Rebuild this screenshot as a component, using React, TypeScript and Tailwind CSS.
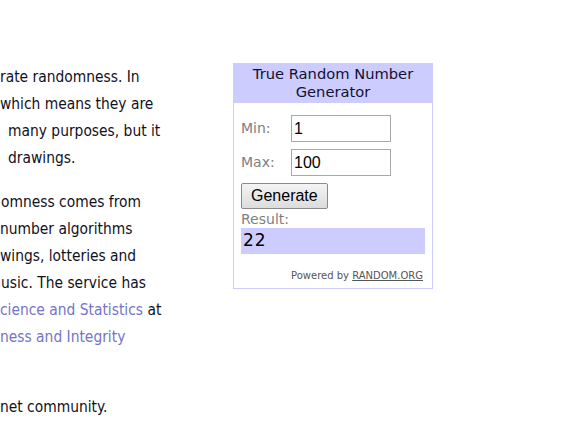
// Random number widget beside a clipped article column
import React from "react";

const textFont = { fontFamily: '"DejaVu Sans Condensed", "DejaVu Sans", sans-serif' };
const widgetFont = { fontFamily: '"DejaVu Sans", Verdana, sans-serif' };
const inputFont = { fontFamily: '"Liberation Sans", Arial, sans-serif' };

// Visible fragments of the article text (the left part is scrolled out of view)
const firstPara = [
  { text: "rate randomness. In", pad: "pl-0" },
  { text: "which means they are", pad: "pl-0" },
  { text: "many purposes, but it", pad: "pl-[8px]" },
  { text: "drawings.", pad: "pl-[8px]" },
];

export default function App() {
  return (
    <div className="min-h-screen bg-white flex items-start">
      {/* Article column, cut off at the left edge */}
      <div className="w-[175px] overflow-hidden mt-[64px] text-[15.4px] leading-[27px] text-[#111122]" style={textFont}>
        <div>
          {firstPara.map((line, i) => (
            <div key={i} className={"whitespace-nowrap " + line.pad}>{line.text}</div>
          ))}
        </div>
        <div className="mt-[17px]">
          <div className="whitespace-nowrap pl-[1px]">omness comes from</div>
          <div className="whitespace-nowrap">number algorithms</div>
          <div className="whitespace-nowrap">wings, lotteries and</div>
          <div className="whitespace-nowrap pl-[1px]">usic. The service has</div>
          <div className="whitespace-nowrap">
            <span className="text-[#7474c8]">cience and Statistics</span> at
          </div>
          <div className="whitespace-nowrap text-[#7474c8]">ness and Integrity</div>
          <div className="h-[27px]"></div>
        </div>
        <div className="mt-[16px]">
          <div className="whitespace-nowrap">net community.</div>
        </div>
      </div>

      {/* True Random Number Generator widget */}
      <div className="ml-[58px] mt-[63px] w-[200px] border border-[#ccccff] bg-white" style={widgetFont}>
        <div className="bg-[#ccccff] text-center text-[14.7px] leading-[18px] text-[#111133] pt-[1px] pb-[2px]">
          True Random Number
          <br />
          Generator
        </div>
        <div className="px-[7px] pt-[12px] pb-[5px]">
          <div className="flex items-center">
            <span className="w-[50px] text-[14px] text-[#808080]">Min:</span>
            <input
              defaultValue="1"
              className="w-[100px] h-[27px] border border-[#a9a9a9] px-[2px] text-[16px] text-black outline-none"
              style={inputFont}
            />
          </div>
          <div className="flex items-center mt-[7px]">
            <span className="w-[50px] text-[14px] text-[#808080]">Max:</span>
            <input
              defaultValue="100"
              className="w-[100px] h-[27px] border border-[#a9a9a9] px-[2px] text-[16px] text-black outline-none"
              style={inputFont}
            />
          </div>
          <button
            className="mt-[7px] h-[26px] px-[9px] border border-[#8a8a8a] rounded-[2px] bg-gradient-to-b from-[#f4f4f4] to-[#dcdcdc] text-[16px] text-black"
            style={inputFont}
          >
            Generate
          </button>
          <div className="text-[14px] leading-[18px] text-[#808080] mt-[1px]">Result:</div>
          <div className="bg-[#ccccff] h-[26px] flex items-center px-[2px] text-[17px] text-black tracking-[1px]">22</div>
          <div className="text-right text-[10px] text-[#555555] mt-[14px] pr-[2px]">
            Powered by <span className="underline">RANDOM.ORG</span>
          </div>
        </div>
      </div>
    </div>
  );
}
